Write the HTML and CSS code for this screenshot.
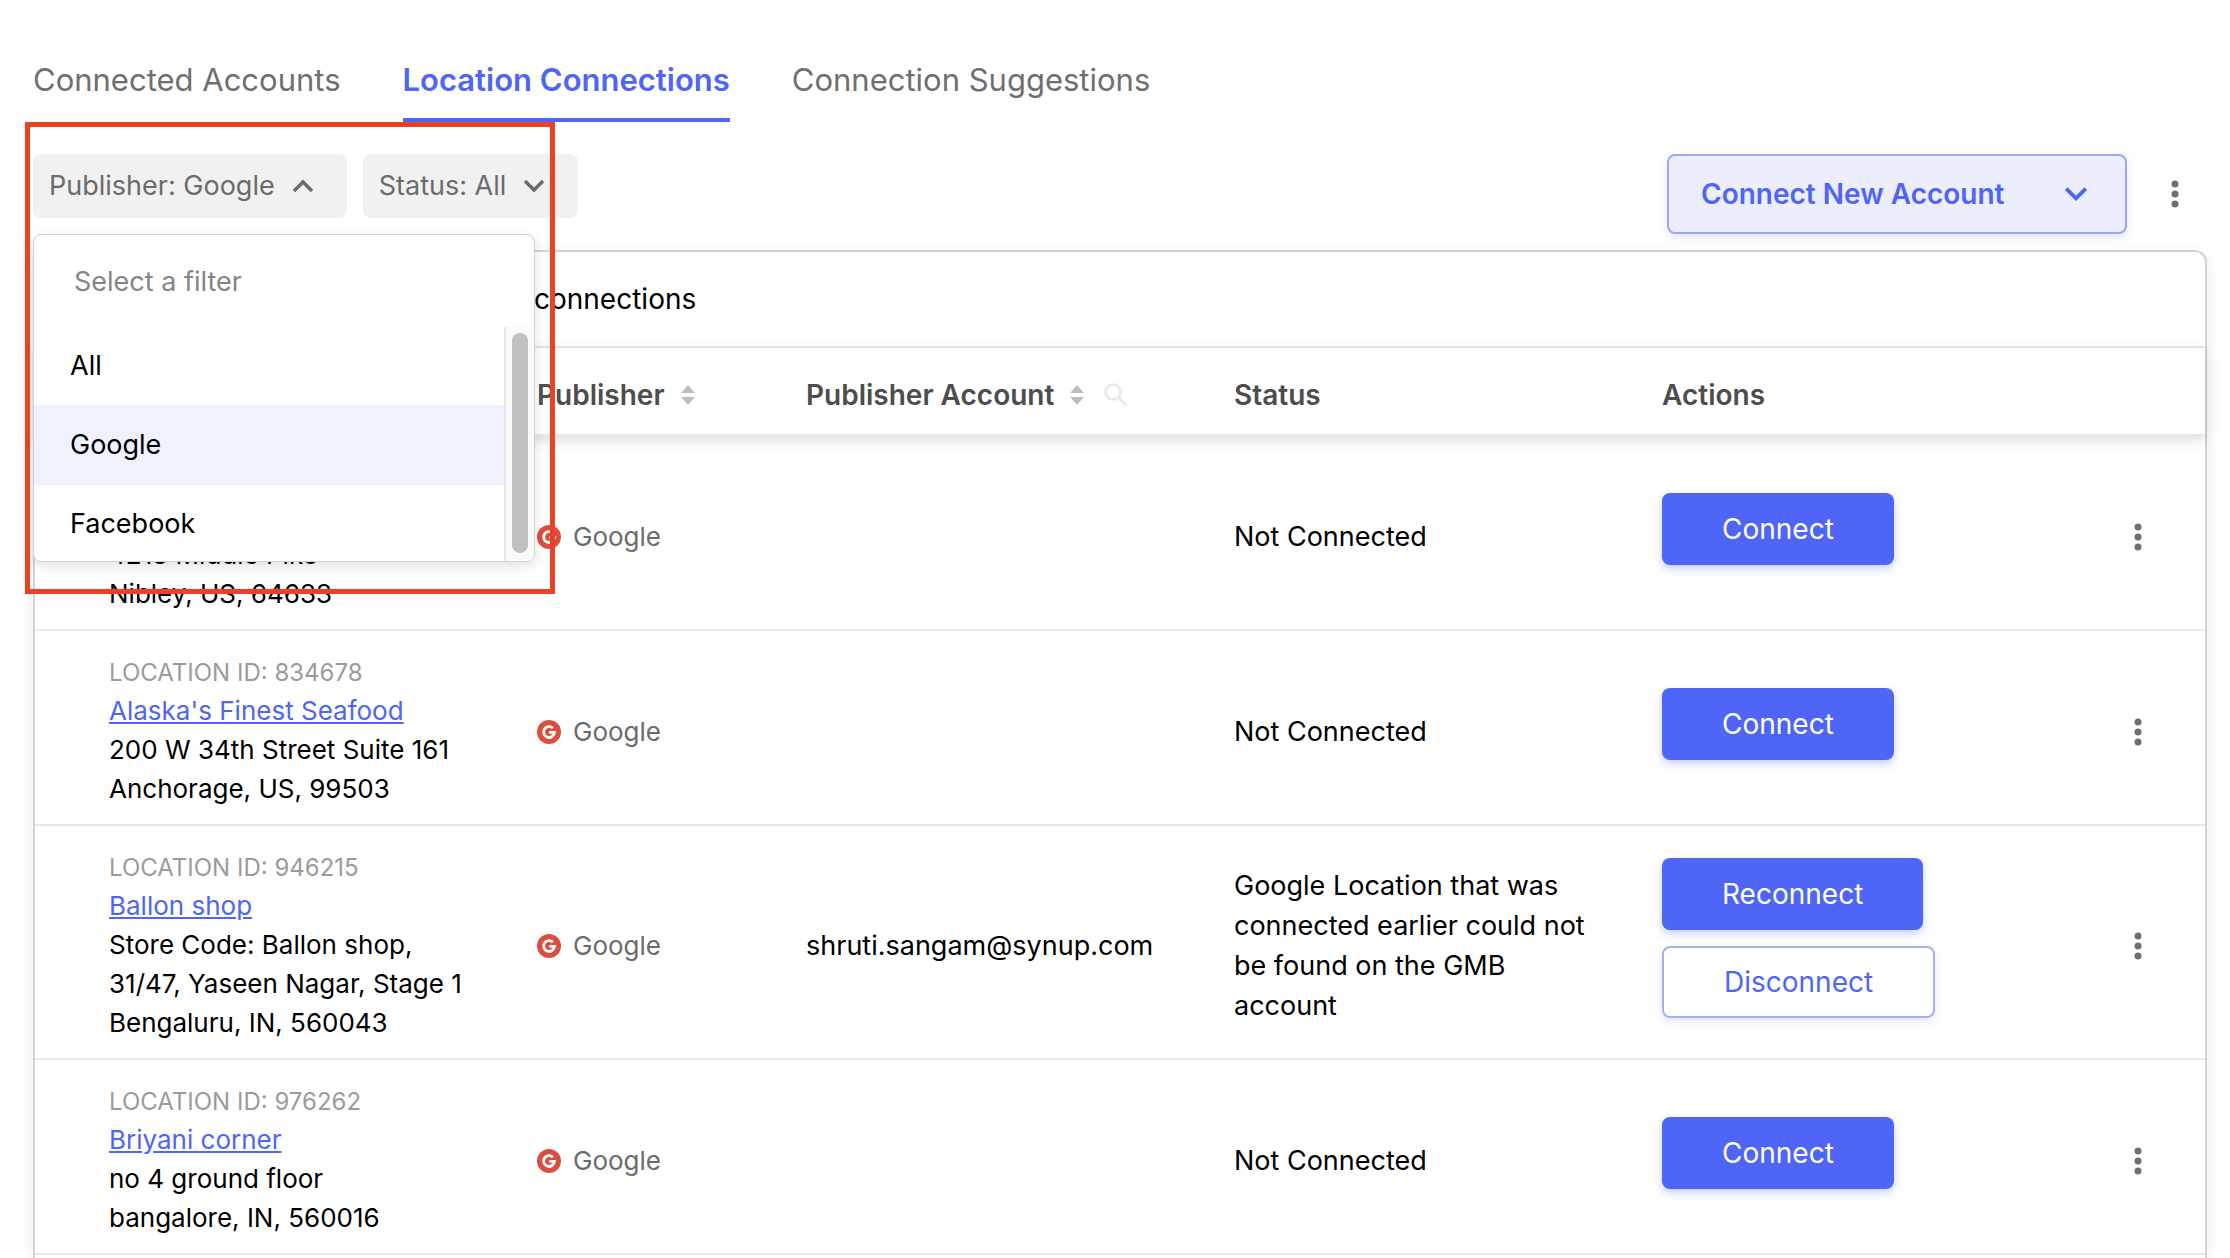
FILE: index.html
```html
<!DOCTYPE html>
<html lang="en">
<head>
  <meta charset="UTF-8" />
  <meta name="viewport" content="width=device-width, initial-scale=1.0"/>
  <title>Location Connections</title>
  <link rel="stylesheet" href="styles.css">
</head>
<body>
  <!-- Shared icons -->
  <svg class="sprite" aria-hidden="true">
    <symbol id="icon-kebab" viewBox="0 0 8 28">
      <circle cx="4" cy="4" r="3.5"/><circle cx="4" cy="14" r="3.5"/><circle cx="4" cy="24" r="3.5"/>
    </symbol>
    <symbol id="icon-chevron" viewBox="0 0 24 16">
      <path d="M3 3l9 9 9-9" fill="none" stroke="currentColor" stroke-width="3.4"/>
    </symbol>
    <symbol id="icon-sort" viewBox="0 0 14 20">
      <path d="M7 0l7 8H0zM7 20l7-8H0z"/>
    </symbol>
    <symbol id="icon-google" viewBox="0 0 24 24">
      <circle cx="12" cy="12" r="12" fill="#db4e3f"/>
      <path d="M15.8 8.2A5.4 5.4 0 1 0 17.4 12.4H12.2" fill="none" stroke="#fff" stroke-width="2.8"/>
    </symbol>
  </svg>

  <main class="page">
    <nav class="tabs">
      <a href="#" class="tab">Connected Accounts</a>
      <a href="#" class="tab active">Location Connections</a>
      <a href="#" class="tab">Connection Suggestions</a>
    </nav>

    <div class="toolbar">
      <div class="filters">
        <div class="filter">
          <button type="button" class="filter-btn" aria-expanded="true">Publisher: Google
            <svg class="chevron up"><use href="#icon-chevron"/></svg>
          </button>
          <div class="dropdown">
            <input type="text" class="dropdown-search" placeholder="Select a filter" aria-label="Select a filter">
            <div class="dropdown-body">
              <div class="options">
                <button type="button" class="option">All</button>
                <button type="button" class="option selected">Google</button>
                <button type="button" class="option">Facebook</button>
              </div>
              <div class="scrollbar"><div class="thumb"></div></div>
            </div>
          </div>
        </div>
        <button type="button" class="filter-btn" aria-expanded="false">Status: All
          <svg class="chevron"><use href="#icon-chevron"/></svg>
        </button>
      </div>
      <div class="toolbar-right">
        <button type="button" class="new-account">Connect New Account
          <svg class="chevron-lg"><use href="#icon-chevron"/></svg>
        </button>
        <button type="button" class="kebab" aria-label="More options"><svg><use href="#icon-kebab"/></svg></button>
      </div>
    </div>

    <section class="card">
      <p class="card-title">connections</p>
      <table class="connections">
        <colgroup>
          <col class="col-location">
          <col class="col-publisher">
          <col class="col-wide">
          <col class="col-wide">
          <col class="col-wide">
          <col>
        </colgroup>
        <thead>
          <tr>
            <th></th>
            <th><div class="head">Publisher <svg class="sort"><use href="#icon-sort"/></svg></div></th>
            <th>
              <div class="head">Publisher Account
                <svg class="sort"><use href="#icon-sort"/></svg>
                <svg class="search" viewBox="0 0 24 24"><circle cx="9" cy="9" r="7.5"/><path d="M14.5 14.5l8 8"/></svg>
              </div>
            </th>
            <th>Status</th>
            <th>Actions</th>
            <th></th>
          </tr>
        </thead>
        <tbody>
          <tr>
            <td class="location">
              <div class="location-id">&nbsp;</div>
              <div>&nbsp;</div>
              <div>4213 Middle Pike</div>
              <div>Nibley, US, 64633</div>
            </td>
            <td><div class="publisher"><svg><use href="#icon-google"/></svg>Google</div></td>
            <td></td>
            <td>Not Connected</td>
            <td><div class="actions"><button type="button" class="btn">Connect</button></div></td>
            <td><button type="button" class="kebab" aria-label="Row options"><svg><use href="#icon-kebab"/></svg></button></td>
          </tr>
          <tr>
            <td class="location">
              <div class="location-id">LOCATION ID: 834678</div>
              <div><a href="#">Alaska's Finest Seafood</a></div>
              <div>200 W 34th Street Suite 161</div>
              <div>Anchorage, US, 99503</div>
            </td>
            <td><div class="publisher"><svg><use href="#icon-google"/></svg>Google</div></td>
            <td></td>
            <td>Not Connected</td>
            <td><div class="actions"><button type="button" class="btn">Connect</button></div></td>
            <td><button type="button" class="kebab" aria-label="Row options"><svg><use href="#icon-kebab"/></svg></button></td>
          </tr>
          <tr>
            <td class="location">
              <div class="location-id">LOCATION ID: 946215</div>
              <div><a href="#">Ballon shop</a></div>
              <div>Store Code: Ballon shop,</div>
              <div>31/47, Yaseen Nagar, Stage 1</div>
              <div>Bengaluru, IN, 560043</div>
            </td>
            <td><div class="publisher"><svg><use href="#icon-google"/></svg>Google</div></td>
            <td>shruti.sangam@synup.com</td>
            <td>Google Location that was connected earlier could not be found on the GMB account</td>
            <td>
              <div class="actions">
                <button type="button" class="btn">Reconnect</button>
                <button type="button" class="btn outline">Disconnect</button>
              </div>
            </td>
            <td><button type="button" class="kebab" aria-label="Row options"><svg><use href="#icon-kebab"/></svg></button></td>
          </tr>
          <tr>
            <td class="location">
              <div class="location-id">LOCATION ID: 976262</div>
              <div><a href="#">Briyani corner</a></div>
              <div>no 4 ground floor</div>
              <div>bangalore, IN, 560016</div>
            </td>
            <td><div class="publisher"><svg><use href="#icon-google"/></svg>Google</div></td>
            <td></td>
            <td>Not Connected</td>
            <td><div class="actions"><button type="button" class="btn">Connect</button></div></td>
            <td><button type="button" class="kebab" aria-label="Row options"><svg><use href="#icon-kebab"/></svg></button></td>
          </tr>
        </tbody>
      </table>
    </section>

    <!-- Highlight around the open filter -->
    <div class="highlight"></div>
  </main>
</body>
</html>
```

FILE: styles.css
```css
* {
  box-sizing: border-box;
  margin: 0;
  padding: 0;
}
body {
  background: #fff;
  color: #000;
  font-family: Inter, "Liberation Sans", sans-serif;
  font-size: 28px;
  line-height: 40px;
}
button, input {
  font: inherit;
  border: none;
  background: none;
}
button {
  cursor: pointer;
}
.sprite {
  display: none;
}
.page {
  position: relative;
  display: flex;
  flex-direction: column;
  height: 100vh;
  padding: 36px 23px 0 33px;
  overflow: hidden;
}

/* Tabs */
.tabs {
  display: flex;
  gap: 62px;
}
.tab {
  height: 86px;
  padding-top: 24px;
  font-size: 31px;
  color: #6f6f6f;
  text-decoration: none;
}
.tab.active {
  color: #4e65f7;
  font-weight: 600;
  border-bottom: 4px solid #4e65f7;
}

/* Toolbar */
.toolbar {
  display: flex;
  justify-content: space-between;
  align-items: flex-start;
  padding: 32px 0 16px;
}
.filters {
  display: flex;
  gap: 16px;
  font-size: 27px;
}
.filter {
  position: relative;
}
.filter-btn {
  display: flex;
  align-items: center;
  gap: 16px;
  height: 64px;
  padding: 0 32px 0 16px;
  border-radius: 8px;
  background: #f1f1f1;
  color: #6b6b6b;
}
.chevron {
  width: 24px;
  height: 16px;
}
.chevron.up {
  transform: rotate(180deg);
}
.dropdown {
  position: absolute;
  top: 80px;
  left: 0;
  z-index: 2;
  width: 502px;
  border: 1px solid #d3d3d3;
  border-radius: 8px;
  background: #fff;
  box-shadow: 0 4px 12px rgba(0, 0, 0, 0.12);
  overflow: hidden;
}
.dropdown-search {
  display: block;
  width: 100%;
  height: 92px;
  padding: 0 40px;
  outline: none;
}
.dropdown-search::placeholder {
  color: #858585;
}
.dropdown-body {
  display: flex;
  height: 234px;
}
.options {
  flex: 1;
  overflow: hidden;
}
.option {
  display: block;
  width: 100%;
  height: 78px;
  padding: 0 36px;
  text-align: left;
}
.option.selected {
  height: 80px;
  background: #eff1fe;
}
.scrollbar {
  width: 30px;
  padding: 6px;
  border-left: 2px solid #e8e8e8;
  background: #fafafa;
}
.thumb {
  width: 16px;
  height: 220px;
  border-radius: 8px;
  background: #c1c1c1;
}
.toolbar-right {
  display: flex;
  align-items: center;
  gap: 24px;
  padding-right: 8px;
}
.new-account {
  display: flex;
  align-items: center;
  justify-content: space-between;
  width: 460px;
  height: 80px;
  padding: 0 36px 0 32px;
  border: 2px solid #9aa8fb;
  border-radius: 8px;
  background: #eceefe;
  color: #4e65f7;
  font-weight: 600;
  box-shadow: 0 4px 8px rgba(78, 101, 247, 0.15);
}
.chevron-lg {
  width: 26px;
  height: 18px;
}
.kebab {
  display: flex;
  align-items: center;
  justify-content: center;
  width: 48px;
  height: 48px;
}
.kebab svg {
  width: 8px;
  height: 28px;
  fill: #6f6f6f;
}

/* Table */
.card {
  flex: 1;
  border: 2px solid #d3d3d3;
  border-bottom: none;
  border-radius: 12px 12px 0 0;
  box-shadow: 0 4px 16px rgba(0, 0, 0, 0.08);
}
.card-title {
  height: 96px;
  padding: 27px 0 0 499px;
  border-bottom: 2px solid #e8e8e8;
}
.connections {
  width: 100%;
  table-layout: fixed;
  border-spacing: 0;
}
.col-location {
  width: 502px;
}
.col-publisher {
  width: 269px;
}
.col-wide {
  width: 428px;
}
thead tr {
  box-shadow: 0 4px 12px rgba(0, 0, 0, 0.14);
}
th {
  height: 88px;
  padding-top: 8px;
  border-bottom: 2px solid #e8e8e8;
  color: #4d4d4d;
  font-weight: 600;
  text-align: left;
}
.head {
  display: flex;
  align-items: center;
  gap: 16px;
}
.sort {
  width: 14px;
  height: 20px;
  fill: #bdbdbd;
}
.search {
  width: 24px;
  height: 24px;
  margin-left: 4px;
  fill: none;
  stroke: #e8e8e8;
  stroke-width: 2.5;
}
td {
  padding: 24px 64px 16px 0;
  border-bottom: 2px solid #e8e8e8;
  vertical-align: middle;
  font-size: 27px;
}
td:last-child {
  padding-left: 24px;
  padding-right: 0;
}
.location {
  padding-left: 74px;
  padding-right: 0;
  font-size: 26px;
  line-height: 39px;
}
.location-id {
  font-size: 24px;
  line-height: 36px;
  color: #9b9b9b;
}
.location a {
  color: #4e65f7;
}
.publisher {
  display: flex;
  align-items: center;
  gap: 12px;
  font-size: 26px;
  color: #6b6b6b;
}
.publisher svg {
  width: 24px;
  height: 24px;
}
.actions {
  display: flex;
  flex-direction: column;
  align-items: flex-start;
  gap: 16px;
  padding-bottom: 16px;
}
.btn {
  height: 72px;
  padding: 0 60px;
  border-radius: 8px;
  background: #4e65f7;
  color: #fff;
  font-size: 28px;
  box-shadow: 0 4px 8px rgba(78, 101, 247, 0.3);
}
.btn.outline {
  border: 2px solid #a3affb;
  background: #fff;
  color: #4e65f7;
  box-shadow: 0 4px 8px rgba(78, 101, 247, 0.15);
}
.highlight {
  position: absolute;
  top: 122px;
  left: 25px;
  z-index: 3;
  width: 530px;
  height: 472px;
  border: 5px solid #ed4125;
  pointer-events: none;
}
```
